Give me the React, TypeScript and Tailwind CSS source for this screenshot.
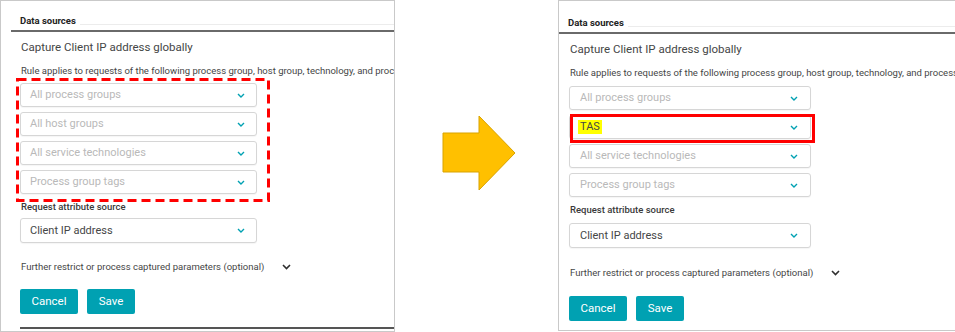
import clsx from "clsx";

function SmallChevron() {
  return (
    <svg width="8" height="5" viewBox="0 0 8 5" fill="none">
      <path d="M1 1l3 3 3-3" stroke="#00a1b2" strokeWidth="1.4" />
    </svg>
  );
}

function DarkChevron() {
  return (
    <svg width="9" height="6" viewBox="0 0 9 6" fill="none">
      <path d="M1 1l3.5 3.5L8 1" stroke="#2f2f2f" strokeWidth="1.6" />
    </svg>
  );
}

interface SelectProps {
  text: string;
  placeholder?: boolean;
  highlight?: boolean;
  wide?: boolean;
  tall?: boolean;
}

function Select({ text, placeholder, highlight, wide, tall }: SelectProps) {
  return (
    <div
      className={clsx(
        "flex items-center justify-between bg-white border border-[#d6d6d6] rounded-[3px] shadow-[0_1px_1px_rgba(0,0,0,0.04)]",
        wide ? "w-[242px] pl-[10px] pr-[12px]" : "w-[237px] pl-[9px] pr-[11px]",
        tall ? "h-[25px]" : "h-[24px]"
      )}
    >
      <span
        className={clsx(
          "text-[11px] leading-[14px]",
          placeholder ? "text-[#b9b9b9]" : "text-[#454646]",
          highlight && "bg-[#ffff00] px-[2px] -ml-[2px]"
        )}
      >
        {text}
      </span>
      <SmallChevron />
    </div>
  );
}

function Panel({ right }: { right?: boolean }) {
  return (
    <div
      className={clsx(
        "relative overflow-hidden bg-white border-[#c9c9c9] text-[#454646]",
        right ? "flex-1 h-[331px] border-l border-t border-b" : "w-[395px] h-[332px] border"
      )}
    >
      {/* tab header */}
      <div className={clsx(!right && "pl-[10px]")}>
        <div className={clsx("flex", right ? "h-[31px] pt-[15px]" : "h-[29px] pt-[13px]")}>
          <span className="pl-[9px] pr-[4px] text-[9.5px] font-bold leading-[14px] text-[#222]">Data sources</span>
          <div className="flex-1 h-px mt-[10px] bg-[#ececec]" />
        </div>
        <div className="h-[2px] bg-[#6a6a6a]" />
      </div>

      <div className={clsx("whitespace-nowrap", right ? "pl-[10px]" : "pl-[19px]")}>
        <div className="mt-[7px] text-[11.5px] leading-[16px] pl-px">Capture Client IP address globally</div>
        <div className="mt-[10px] text-[9.5px] leading-[12px] pl-px">
          Rule applies to requests of the following process group, host group, technology, and process group tags
        </div>

        <div className={clsx("flex flex-col gap-[5px]", right ? "mt-[7px]" : "mt-[6px]")}>
          <Select text="All process groups" placeholder wide={right} />
          {right ? (
            <Select text="TAS" highlight wide />
          ) : (
            <Select text="All host groups" placeholder />
          )}
          <Select text="All service technologies" placeholder wide={right} />
          <Select text="Process group tags" placeholder wide={right} />
        </div>

        <div className="mt-[7px] text-[9.5px] leading-[12px] font-medium text-[#3a3a3a] pl-px">Request attribute source</div>
        <div className={right ? "mt-[7px]" : "mt-[5px]"}>
          <Select text="Client IP address" wide={right} tall />
        </div>

        <div className={clsx("flex items-center gap-[18px] pl-px", right ? "mt-[19px]" : "mt-[18px]")}>
          <span className="text-[9.5px] leading-[12px]">Further restrict or process captured parameters (optional)</span>
          <DarkChevron />
        </div>

        <div className={clsx("flex gap-[9px]", right ? "mt-[17px]" : "mt-[16px]")}>
          <button className="h-[25px] w-[58px] rounded-[2px] bg-[#00a1b2] text-white text-[11.5px]">
            Cancel
          </button>
          <button className="h-[25px] w-[48px] rounded-[2px] bg-[#00a1b2] text-white text-[11.5px]">
            Save
          </button>
        </div>

        {!right && <div className="mt-[13px] h-[2px] bg-[#555]" />}
      </div>

      {/* annotations */}
      {right ? (
        <div className="absolute left-[11px] top-[113px] w-[245px] h-[29px] border-[3px] border-[#ff0000]" />
      ) : (
        <svg className="absolute left-[15px] top-[77px]" width="254" height="124" viewBox="0 0 254 124" fill="none">
          <rect x="1.5" y="1.5" width="251" height="121" stroke="#ff0000" strokeWidth="3" strokeDasharray="9 5" />
        </svg>
      )}
    </div>
  );
}

function Arrow() {
  return (
    <svg width="74" height="76" viewBox="0 0 74 76" fill="none">
      <path d="M1 18h36V1l36 37-36 37V57H1z" fill="#ffc000" stroke="#d9a300" strokeWidth="1" />
    </svg>
  );
}

export default function App() {
  return (
    <div className="w-[955px] h-[332px] flex bg-white font-['Roboto',sans-serif] overflow-hidden">
      <Panel />
      <div className="w-[163px] flex items-center justify-center pb-[27px] pl-[4px]">
        <Arrow />
      </div>
      <Panel right />
    </div>
  );
}
